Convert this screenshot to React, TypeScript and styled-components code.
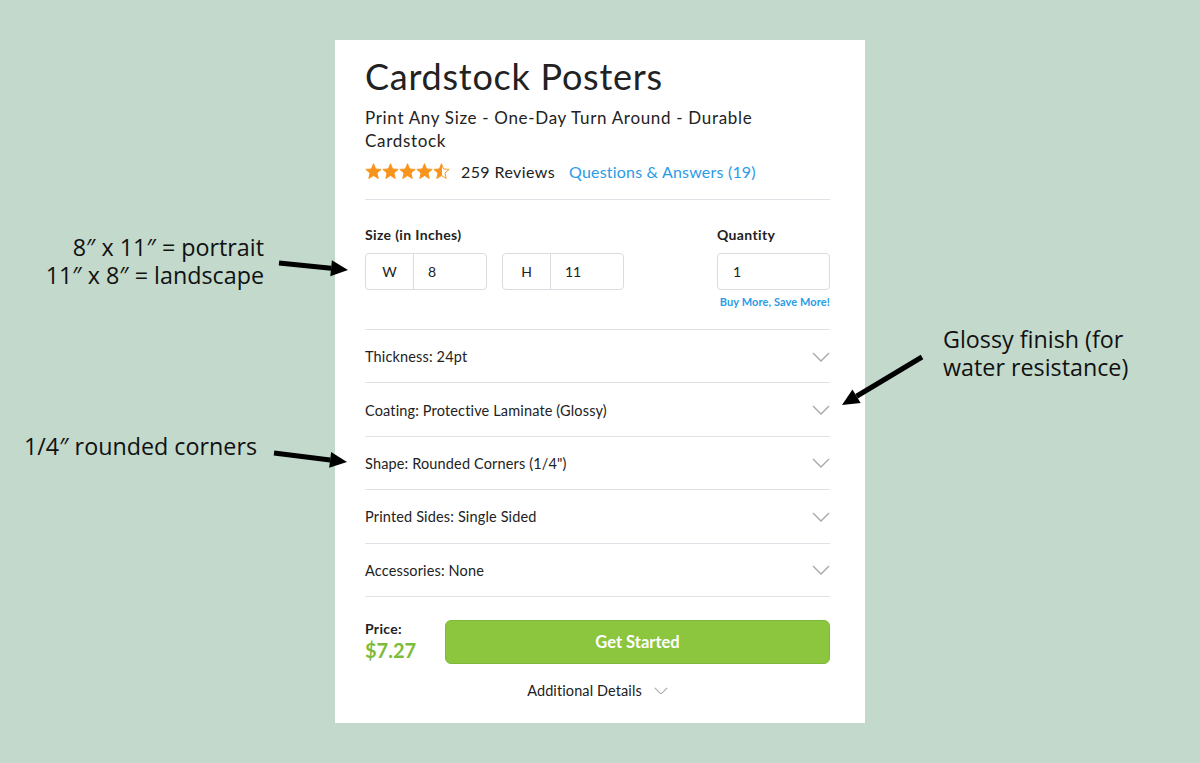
import React from "react";
import styled, { createGlobalStyle } from "styled-components";

const GlobalStyle = createGlobalStyle`
  html, body {
    margin: 0;
    padding: 0;
    background: #c2d9cc;
  }
  body {
    font-family: Lato, "Liberation Sans", sans-serif;
    color: #222;
  }
  * {
    box-sizing: border-box;
  }
`;

const OPTIONS = [
  "Thickness: 24pt",
  "Coating: Protective Laminate (Glossy)",
  'Shape: Rounded Corners (1/4")',
  "Printed Sides: Single Sided",
  "Accessories: None",
];

const Chevron = ({ size = 18 }: { size?: number }) => (
  <svg width={size} height={size * 0.56} viewBox="0 0 18 10" fill="none">
    <path d="M1 1 L9 9 L17 1" stroke="#a9a9a9" strokeWidth="1.4" />
  </svg>
);

const Star = ({ half = false }: { half?: boolean }) => (
  <svg width="17" height="16" viewBox="0 0 24 23">
    <defs>
      <linearGradient id="halfFill">
        <stop offset="50%" stopColor="#f7941d" />
        <stop offset="50%" stopColor="#ffffff" />
      </linearGradient>
    </defs>
    <path
      d="M12 1 L15 8.6 L23 9.2 L16.9 14.4 L18.8 22.2 L12 18 L5.2 22.2 L7.1 14.4 L1 9.2 L9 8.6 Z"
      fill={half ? "url(#halfFill)" : "#f7941d"}
      stroke="#f7941d"
      strokeWidth="1.4"
      strokeLinejoin="round"
    />
  </svg>
);

const Arrow = ({
  x1,
  y1,
  x2,
  y2,
}: {
  x1: number;
  y1: number;
  x2: number;
  y2: number;
}) => {
  const angle = Math.atan2(y2 - y1, x2 - x1);
  const len = 17;
  const wing = 8;
  const bx = x2 - len * Math.cos(angle);
  const by = y2 - len * Math.sin(angle);
  const px = -Math.sin(angle) * wing;
  const py = Math.cos(angle) * wing;
  return (
    <g>
      <line x1={x1} y1={y1} x2={bx} y2={by} stroke="#000" strokeWidth="5" />
      <polygon
        points={`${x2},${y2} ${bx + px},${by + py} ${bx - px},${by - py}`}
        fill="#000"
      />
    </g>
  );
};

export default function App() {
  return (
    <Page>
      <GlobalStyle />
      <Card>
        <Title>Cardstock Posters</Title>
        <Subtitle>
          Print Any Size - One-Day Turn Around - Durable
          <br />
          Cardstock
        </Subtitle>
        <RatingRow>
          <Stars>
            <Star />
            <Star />
            <Star />
            <Star />
            <Star half />
          </Stars>
          <Reviews>259 Reviews</Reviews>
          <QaLink>Questions &amp; Answers (19)</QaLink>
        </RatingRow>

        <SizeSection>
          <FieldGroup>
            <Label>Size (in Inches)</Label>
            <SizeInputs>
              <SplitInput>
                <Prefix>W</Prefix>
                <Value>8</Value>
              </SplitInput>
              <SplitInput>
                <Prefix>H</Prefix>
                <Value>11</Value>
              </SplitInput>
            </SizeInputs>
          </FieldGroup>
          <FieldGroup>
            <Label>Quantity</Label>
            <QtyInput>1</QtyInput>
            <Promo>Buy More, Save More!</Promo>
          </FieldGroup>
        </SizeSection>

        <OptionList>
          {OPTIONS.map((opt) => (
            <OptionRow key={opt}>
              <span>{opt}</span>
              <Chevron />
            </OptionRow>
          ))}
        </OptionList>

        <PriceRow>
          <PriceBlock>
            <PriceLabel>Price:</PriceLabel>
            <PriceValue>$7.27</PriceValue>
          </PriceBlock>
          <StartButton>Get Started</StartButton>
        </PriceRow>

        <Details>
          Additional Details
          <Chevron size={14} />
        </Details>
      </Card>

      <Note $top={233} $right={936} $align="right">
        8″ x 11″ = portrait
        <br />
        11″ x 8″ = landscape
      </Note>
      <Note $top={325} $left={943}>
        Glossy finish (for
        <br />
        water resistance)
      </Note>
      <Note $top={432} $left={24}>
        1/4″ rounded corners
      </Note>

      <Arrows width="1200" height="763">
        <Arrow x1={279} y1={263} x2={348} y2={270} />
        <Arrow x1={922} y1={357} x2={842} y2={405} />
        <Arrow x1={274} y1={453} x2={347} y2={462} />
      </Arrows>
    </Page>
  );
}

const Page = styled.div`
  position: relative;
  width: 1200px;
  height: 763px;
  display: flex;
  justify-content: center;
  align-items: flex-start;
  padding-top: 40px;
  background: #c2d9cc;
  overflow: hidden;
`;

const Card = styled.div`
  width: 530px;
  height: 683px;
  background: #fff;
  padding: 14px 35px 0 30px;
  display: flex;
  flex-direction: column;
`;

const Title = styled.h1`
  margin: 0;
  font-size: 36px;
  font-weight: 400;
  line-height: 44px;
  color: #222;
  letter-spacing: 0.75px;
`;

const Subtitle = styled.p`
  margin: 8px 0 0;
  font-size: 17px;
  line-height: 23px;
  color: #222;
  letter-spacing: 0.68px;
`;

const RatingRow = styled.div`
  display: flex;
  align-items: center;
  height: 24px;
  margin-top: 7px;
  padding-bottom: 16px;
  box-sizing: content-box;
  border-bottom: 1px solid #dfe2e6;
`;

const Stars = styled.div`
  display: flex;
  margin-right: 11px;
`;

const Reviews = styled.span`
  font-size: 16px;
  color: #222;
  margin-right: 14px;
  letter-spacing: 0.4px;
`;

const QaLink = styled.span`
  font-size: 16px;
  color: #2a9be6;
  letter-spacing: 0.2px;
`;

const SizeSection = styled.div`
  display: flex;
  justify-content: space-between;
  padding: 26px 0 21px;
  border-bottom: 1px solid #dfe2e6;
`;

const FieldGroup = styled.div`
  display: flex;
  flex-direction: column;
`;

const Label = styled.div`
  font-size: 14px;
  font-weight: 700;
  color: #222;
  line-height: 17px;
  margin-bottom: 10px;
  letter-spacing: 0.35px;
`;

const SizeInputs = styled.div`
  display: flex;
  gap: 15px;
`;

const SplitInput = styled.div`
  display: flex;
  width: 122px;
  height: 37px;
  border: 1px solid #d9dce0;
  border-radius: 4px;
  font-size: 14px;
`;

const Prefix = styled.div`
  width: 48px;
  display: flex;
  align-items: center;
  justify-content: center;
  border-right: 1px solid #d9dce0;
  color: #222;
`;

const Value = styled.div`
  display: flex;
  align-items: center;
  padding-left: 14px;
  color: #222;
`;

const QtyInput = styled.div`
  width: 113px;
  height: 37px;
  border: 1px solid #d9dce0;
  border-radius: 4px;
  display: flex;
  align-items: center;
  padding-left: 15px;
  font-size: 14px;
`;

const Promo = styled.div`
  margin-top: 5px;
  font-size: 11px;
  font-weight: 700;
  color: #2a9be6;
  text-align: right;
  letter-spacing: 0.1px;
  white-space: nowrap;
`;

const OptionList = styled.div`
  display: flex;
  flex-direction: column;
`;

const OptionRow = styled.div`
  height: 53.4px;
  display: flex;
  align-items: center;
  justify-content: space-between;
  border-bottom: 1px solid #dfe2e6;
  font-size: 14.5px;
  color: #222;
  padding-top: 1px;
  letter-spacing: 0.15px;
`;

const PriceRow = styled.div`
  display: flex;
  align-items: center;
  margin-top: 23px;
`;

const PriceBlock = styled.div`
  width: 80px;
  display: flex;
  flex-direction: column;
`;

const PriceLabel = styled.div`
  font-size: 14px;
  font-weight: 700;
  line-height: 17px;
  color: #222;
  letter-spacing: 0.3px;
`;

const PriceValue = styled.div`
  font-size: 20px;
  font-weight: 700;
  line-height: 26px;
  color: #7dbc3b;
`;

const StartButton = styled.button`
  flex: 1;
  height: 44px;
  border: 1px solid #7db93a;
  border-radius: 6px;
  background: #8cc63f;
  color: #fff;
  font-family: inherit;
  font-size: 16.5px;
  font-weight: 700;
  cursor: pointer;
`;

const Details = styled.div`
  display: flex;
  align-items: center;
  justify-content: center;
  gap: 12px;
  margin-top: 18px;
  font-size: 14.5px;
  color: #222;
  letter-spacing: 0.1px;
`;

const Note = styled.div<{
  $top: number;
  $left?: number;
  $right?: number;
  $align?: string;
}>`
  position: absolute;
  top: ${({ $top }) => $top}px;
  ${({ $left }) => ($left !== undefined ? `left: ${$left}px;` : "")}
  ${({ $right }) => ($right !== undefined ? `right: ${$right}px;` : "")}
  text-align: ${({ $align }) => $align || "left"};
  font-family: "Open Sans", sans-serif;
  font-size: 23.3px;
  line-height: 28px;
  color: #111;
`;

const Arrows = styled.svg`
  position: absolute;
  top: 0;
  left: 0;
  pointer-events: none;
`;
